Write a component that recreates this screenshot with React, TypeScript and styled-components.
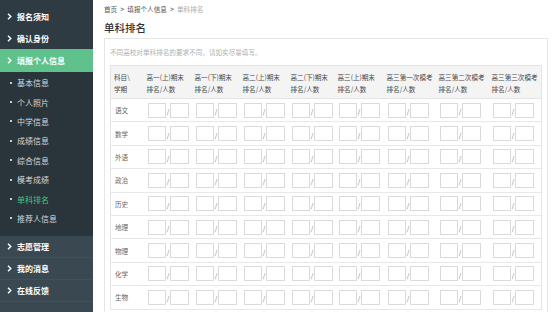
import React from "react";
import styled, { createGlobalStyle } from "styled-components";

const Global = createGlobalStyle`
  html, body { margin: 0; padding: 0; background: #fff; }
  body { font-family: "Noto Sans CJK SC", "Noto Sans", sans-serif; }
  * { box-sizing: border-box; }
`;

const Page = styled.div`
  display: flex;
  width: 554px;
  height: 312px;
  overflow: hidden;
`;

const Sidebar = styled.nav`
  width: 93px;
  flex: none;
  background: #2f3b43;
  display: flex;
  flex-direction: column;
  padding-top: 5px;
`;

const TopItem = styled.div<{ $active?: boolean }>`
  height: ${(p) => (p.$active ? 23 : 22)}px;
  display: flex;
  align-items: center;
  padding-left: 7px;
  gap: 5px;
  font-size: 8px;
  font-weight: 700;
  color: #fff;
  background: ${(p) => (p.$active ? "#5fc28d" : "transparent")};
`;

const SubMenu = styled.div`
  background: #29343b;
  padding: 1px 0 8px;
  display: flex;
  flex-direction: column;
`;

const SubItem = styled.div<{ $active?: boolean }>`
  height: 19.4px;
  display: flex;
  align-items: center;
  padding-left: 10px;
  gap: 5px;
  font-size: 8px;
  color: ${(p) => (p.$active ? "#4cc383" : "#d6d9db")};
`;

const Dot = styled.span`
  width: 2px;
  height: 2px;
  background: #c8cccf;
`;

const Bottom = styled.div`
  flex: 1;
  background: #3a4852;
`;

const BottomItem = styled(TopItem)`
  border-bottom: 1px solid #41505a;
`;

const Chevron = () => (
  <svg width="5" height="7" viewBox="0 0 5 7">
    <path d="M1 0.8 L3.8 3.5 L1 6.2" fill="none" stroke="#fff" strokeWidth="1.4" />
  </svg>
);

const Main = styled.main`
  flex: 1;
  padding: 4px 7px 0 11px;
  display: flex;
  flex-direction: column;
`;

const Crumbs = styled.div`
  height: 10px;
  line-height: 10px;
  font-size: 6.6px;
  color: #555;
  display: flex;
  gap: 3px;
  align-items: center;
`;

const CrumbSep = styled.span`
  font-weight: 700;
  color: #666;
  font-size: 7px;
`;

const CrumbLast = styled.span`
  color: #aaa;
`;

const Title = styled.h1`
  margin: 7px 0 0;
  font-size: 10.5px;
  line-height: 14px;
  font-weight: 500;
  color: #333;
`;

const Card = styled.section`
  margin-top: 3px;
  flex: 1;
  border: 1px solid #e6e6e6;
  border-bottom: none;
  padding: 0 5px;
`;

const Note = styled.p`
  margin: 8px 0 0;
  font-size: 6.6px;
  line-height: 10px;
  color: #b0b0b0;
`;

const Table = styled.table`
  margin-top: 8px;
  width: 431px;
  border-collapse: collapse;
  table-layout: fixed;
  border-left: 1px solid #e4e4e4;
  border-right: 1px solid #e4e4e4;
  font-size: 6.6px;
  color: #555;
`;

const HeadRow = styled.tr`
  background: #f4f4f4;
  border-top: 1px solid #e4e4e4;
  border-bottom: 1px solid #e4e4e4;
`;

const Th = styled.th`
  font-weight: 400;
  text-align: left;
  padding: 5px 0 3px 3px;
  line-height: 12px;
  white-space: nowrap;
  vertical-align: top;
  color: #4a4a4a;
`;

const Row = styled.tr`
  height: 23.4px;
  border-bottom: 1px solid #e8e8e8;
`;

const SubjectCell = styled.td`
  padding-left: 4px;
  color: #666;
`;

const Cell = styled.td`
  padding-left: 4px;
`;

const Pair = styled.div`
  display: flex;
  align-items: center;
`;

const Box = styled.div`
  width: 18.5px;
  height: 15px;
  border: 1px solid #dadada;
  background: #fff;
`;

const Slash = styled.span`
  width: 4px;
  text-align: center;
  font-size: 6.5px;
  color: #777;
  line-height: 15px;
  padding-top: 3px;
`;

const cols = [
  "高一(上)期末",
  "高一(下)期末",
  "高二(上)期末",
  "高二(下)期末",
  "高三(上)期末",
  "高三第一次模考",
  "高三第二次模考",
  "高三第三次模考",
];
const widths = [33, 48, 48, 48, 47, 49, 52, 53, 53];
const subjects = ["语文", "数学", "外语", "政治", "历史", "地理", "物理", "化学", "生物"];
const subs = ["基本信息", "个人照片", "中学信息", "成绩信息", "综合信息", "模考成绩", "单科排名", "推荐人信息"];

export default function App() {
  return (
    <>
      <Global />
      <Page>
        <Sidebar>
          <TopItem><Chevron />报名须知</TopItem>
          <TopItem><Chevron />确认身份</TopItem>
          <TopItem $active><Chevron />填报个人信息</TopItem>
          <SubMenu>
            {subs.map((s) => (
              <SubItem key={s} $active={s === "单科排名"}>
                <Dot />
                {s}
              </SubItem>
            ))}
          </SubMenu>
          <Bottom>
            <BottomItem><Chevron />志愿管理</BottomItem>
            <BottomItem><Chevron />我的消息</BottomItem>
            <BottomItem><Chevron />在线反馈</BottomItem>
          </Bottom>
        </Sidebar>
        <Main>
          <Crumbs>
            <span>首页</span>
            <CrumbSep>&gt;</CrumbSep>
            <span>填报个人信息</span>
            <CrumbSep>&gt;</CrumbSep>
            <CrumbLast>单科排名</CrumbLast>
          </Crumbs>
          <Title>单科排名</Title>
          <Card>
            <Note>不同高校对单科排名的要求不同，请如实尽量填写。</Note>
            <Table>
              <colgroup>
                {widths.map((w, i) => (
                  <col key={i} style={{ width: w }} />
                ))}
              </colgroup>
              <thead>
                <HeadRow>
                  <Th>科目\<br />学期</Th>
                  {cols.map((c) => (
                    <Th key={c}>{c}<br />排名/人数</Th>
                  ))}
                </HeadRow>
              </thead>
              <tbody>
                {subjects.map((s) => (
                  <Row key={s}>
                    <SubjectCell>{s}</SubjectCell>
                    {cols.map((c) => (
                      <Cell key={c}>
                        <Pair>
                          <Box />
                          <Slash>/</Slash>
                          <Box />
                        </Pair>
                      </Cell>
                    ))}
                  </Row>
                ))}
              </tbody>
            </Table>
          </Card>
        </Main>
      </Page>
    </>
  );
}
